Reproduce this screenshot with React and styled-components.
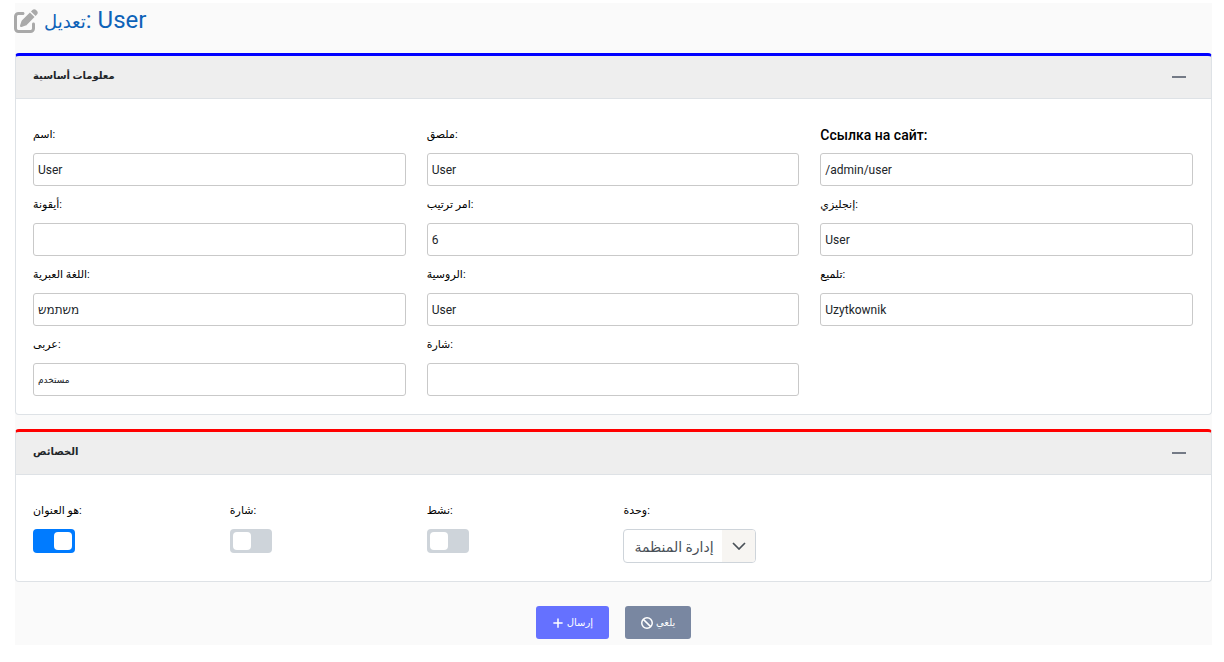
import React, { useState } from 'react';
import styled, { createGlobalStyle } from 'styled-components';
import { FaBan, FaPenToSquare, FaPlus } from 'react-icons/fa6';

const infoFields = [
  { id: 'name', label: 'اسم:', value: 'User' },
  { id: 'label', label: 'ملصق:', value: 'User' },
  { id: 'link', label: 'Ссылка на сайт:', value: '/admin/user', strong: true },
  { id: 'icon', label: 'أيقونة:', value: '' },
  { id: 'order', label: 'امر ترتيب:', value: '6' },
  { id: 'english', label: 'إنجليزي:', value: 'User' },
  { id: 'hebrew', label: 'اللغة العبرية:', value: 'משתמש' },
  { id: 'russian', label: 'الروسية:', value: 'User' },
  { id: 'polish', label: 'تلميع:', value: 'Uzytkownik' },
  { id: 'arabic', label: 'عربى:', value: 'مستخدم', small: true },
  { id: 'badge', label: 'شارة:', value: '' },
];

const switches = [
  { id: 'isTitle', label: 'هو العنوان:', on: true },
  { id: 'hasBadge', label: 'شارة:', on: false },
  { id: 'active', label: 'نشط:', on: false },
];

const Panel = ({ title, accent, children }) => {
  const [open, setOpen] = useState(true);

  return (
    <Card>
      <CardHeader $accent={accent}>
        <CardTitle>{title}</CardTitle>
        <Collapse
          type="button"
          aria-label={title}
          aria-expanded={open}
          onClick={() => setOpen(!open)}
        >
          <svg width="14" height="14" viewBox="0 0 14 14">
            <path d="M0 7h14" stroke="#747a86" strokeWidth="2" />
          </svg>
        </Collapse>
      </CardHeader>
      {open && <CardBody>{children}</CardBody>}
    </Card>
  );
};

const App = () => {
  return (
    <>
      <GlobalStyle />
      <Page onSubmit={(e) => e.preventDefault()}>
        <Title>
          <FaPenToSquare />
          <TitleText>
            <TitleArabic>تعديل</TitleArabic>: User
          </TitleText>
        </Title>

        <Panel title="معلومات أساسية" accent="#0000ff">
          <Grid $columns={3}>
            {infoFields.map((field) => (
              <Field key={field.id}>
                <Label htmlFor={field.id} $strong={field.strong}>
                  {field.label}
                </Label>
                <Input
                  id={field.id}
                  type="text"
                  defaultValue={field.value}
                  $small={field.small}
                />
              </Field>
            ))}
          </Grid>
        </Panel>

        <Panel title="الخصائص" accent="#ff0000">
          <Grid $columns={6}>
            {switches.map((item) => (
              <Field key={item.id}>
                <Label htmlFor={item.id}>{item.label}</Label>
                <Switch id={item.id} type="checkbox" defaultChecked={item.on} />
              </Field>
            ))}
            <Field>
              <Label htmlFor="unit">وحدة:</Label>
              <SelectBox>
                <Select id="unit">
                  <option>إدارة المنظمة</option>
                </Select>
                <Arrow>
                  <svg width="14" height="8" viewBox="0 0 14 8" fill="none">
                    <path
                      d="M1 1l6 6 6-6"
                      stroke="#495057"
                      strokeWidth="1.7"
                    />
                  </svg>
                </Arrow>
              </SelectBox>
            </Field>
          </Grid>
        </Panel>

        <Actions>
          <Button type="submit" $color="#6571ff">
            <FaPlus />
            إرسال
          </Button>
          <Button type="button" $color="#7987a1">
            <FaBan />
            يلغي
          </Button>
        </Actions>
      </Page>
    </>
  );
};

const GlobalStyle = createGlobalStyle`
  * {
    box-sizing: border-box;
  }

  body {
    margin: 0;
    background: #fff;
    color: #000;
    font-family: Roboto, 'DejaVu Sans', sans-serif;
    font-size: 13px;
  }

  input, select, button {
    font-family: inherit;
  }
`;

const Page = styled.form`
  margin: 3px 12px 0 14px;
  padding: 0 0 6px 1px;
  background: linear-gradient(to right, #fff 1px, #fafafa 1px);
`;

const Title = styled.h1`
  display: flex;
  align-items: center;
  gap: 6px;
  height: 36px;
  margin: 0 0 14px -1px;
  color: #0d62b8;
  font-size: 24px;
  font-weight: 400;

  svg {
    color: #a9a9a9;
  }
`;

const TitleText = styled.span`
  line-height: 38px;
`;

const TitleArabic = styled.span`
  font-size: 18px;
`;

const Card = styled.section`
  margin-bottom: 14px;
  background: #fff;
  border: 1px solid #dee2e6;
  border-top: 0;
  border-radius: 4px;
`;

const CardHeader = styled.div`
  display: flex;
  align-items: center;
  justify-content: space-between;
  height: 46px;
  margin: 0 -1px;
  padding: 0 25px 0 17px;
  background: #eee;
  border: 1px solid #dee2e6;
  border-top: 3px solid ${({ $accent }) => $accent};
  border-radius: 4px 4px 0 0;
`;

const CardTitle = styled.h2`
  margin: 0;
  padding-bottom: 4px;
  color: #212529;
  font-size: 10px;
  font-weight: 700;
`;

const Collapse = styled.button`
  display: flex;
  padding: 0;
  border: 0;
  background: none;
  cursor: pointer;
`;

const CardBody = styled.div`
  padding: 26px 18px 18px 17px;
`;

const Grid = styled.div`
  display: grid;
  grid-template-columns: repeat(${({ $columns }) => $columns}, 1fr);
  gap: 9px 21px;
`;

const Field = styled.div`
  display: flex;
  flex-direction: column;
  align-items: flex-start;
  gap: 8px;
`;

const Label = styled.label`
  font-size: ${({ $strong }) => ($strong ? '14px' : '11px')};
  font-weight: ${({ $strong }) => ($strong ? 500 : 400)};
  line-height: 20px;
  white-space: nowrap;
`;

const Input = styled.input`
  width: 100%;
  height: 33px;
  padding: 0 4px;
  border: 1px solid #c9c9c9;
  border-radius: 3px;
  background: #fff;
  color: #212529;
  font-size: ${({ $small }) => ($small ? '9px' : '12px')};
`;

const Switch = styled.input`
  appearance: none;
  display: flex;
  width: 42px;
  height: 24px;
  margin: 0;
  padding: 3px;
  border-radius: 4px;
  background: #ced4da;
  cursor: pointer;

  &::before {
    content: '';
    width: 18px;
    height: 18px;
    border-radius: 4px;
    background: #fff;
  }

  &:checked {
    justify-content: flex-end;
    background: #007bff;
  }
`;

const SelectBox = styled.div`
  position: relative;
`;

const Select = styled.select`
  appearance: none;
  width: 133px;
  height: 34px;
  padding: 2px 40px 0 10px;
  border: 1px solid #ced4da;
  border-radius: 4px;
  background: #fff;
  color: #495057;
  font-size: 14px;
`;

const Arrow = styled.span`
  position: absolute;
  top: 1px;
  right: 1px;
  bottom: 1px;
  display: flex;
  align-items: center;
  justify-content: center;
  width: 33px;
  border-radius: 0 3px 3px 0;
  background: #f7f5f2;
  pointer-events: none;
`;

const Actions = styled.div`
  display: flex;
  justify-content: center;
  gap: 16px;
  padding-top: 10px;
`;

const Button = styled.button`
  display: flex;
  align-items: center;
  gap: 3px;
  height: 33px;
  padding: 0 16px;
  border: 0;
  border-radius: 3px;
  background: ${({ $color }) => $color};
  color: #fff;
  font-size: 10px;
  cursor: pointer;

  svg {
    width: 12px;
    height: 12px;
  }
`;

export default App;
